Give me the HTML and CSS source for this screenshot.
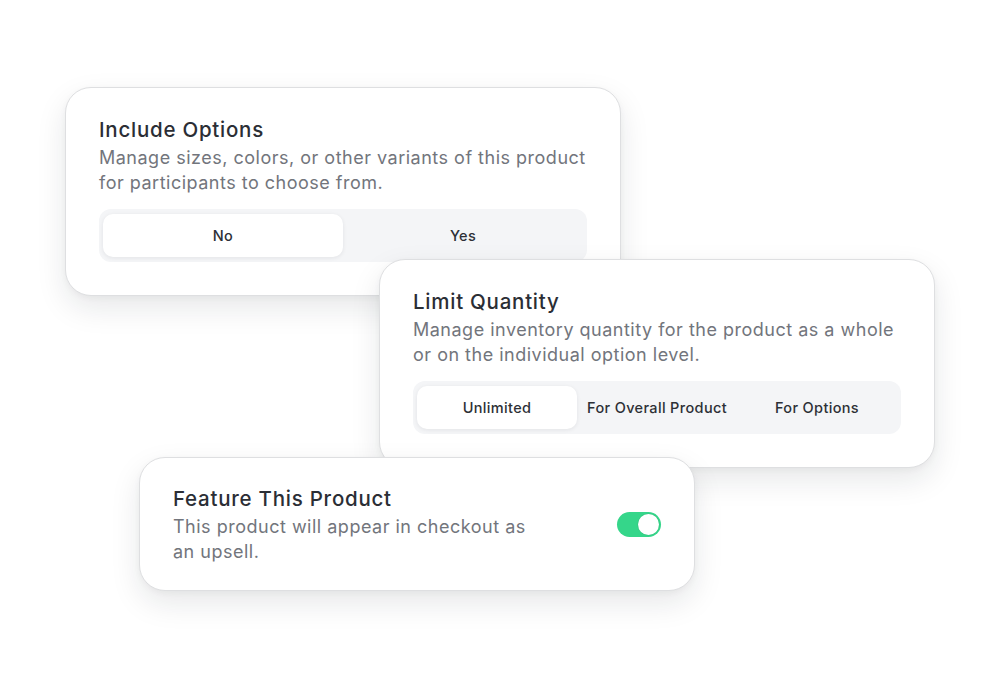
FILE: index.html
```html
<!DOCTYPE html>
<html>
<head>
<meta charset="utf-8">
<link rel="stylesheet" href="styles.css">
</head>
<body>
<div class="canvas">
  <section class="card card-options">
    <h2 class="card-title">Include Options</h2>
    <p class="card-desc">Manage sizes, colors, or other variants of this product for participants to choose from.</p>
    <div class="segmented two">
      <div class="seg active">No</div>
      <div class="seg">Yes</div>
    </div>
  </section>

  <section class="card card-quantity">
    <h2 class="card-title">Limit Quantity</h2>
    <p class="card-desc">Manage inventory quantity for the product as a whole or on the individual option level.</p>
    <div class="segmented three">
      <div class="seg active">Unlimited</div>
      <div class="seg">For Overall Product</div>
      <div class="seg">For Options</div>
    </div>
  </section>

  <section class="card card-feature">
    <div class="feature-row">
      <div class="feature-text">
        <h2 class="card-title">Feature This Product</h2>
        <p class="card-desc">This product will appear in checkout as an upsell.</p>
      </div>
      <div class="toggle"><span class="knob"></span></div>
    </div>
  </section>
</div>
</body>
</html>
```

FILE: styles.css
```css
* { box-sizing: border-box; }
html, body {
  margin: 0;
  padding: 0;
  background: #ffffff;
}
body {
  font-family: "Inter", "Noto Sans", "Liberation Sans", sans-serif;
  color: #2b2e35;
}
.canvas {
  position: relative;
  width: 1000px;
  height: 680px;
  overflow: hidden;
}
.card {
  position: absolute;
  width: 556px;
  background: #ffffff;
  border: 1.5px solid #dedfe1;
  border-radius: 26px;
  box-shadow: 0 12px 30px rgba(20, 25, 35, 0.10), 0 2px 6px rgba(20, 25, 35, 0.04);
  padding: 29px 33px 33px 33px;
}
.card-options { left: 65px; top: 87px; height: 209px; z-index: 1; }
.card-quantity { left: 379px; top: 259px; height: 209px; z-index: 2; }
.card-feature { left: 139px; top: 457px; height: 134px; z-index: 3; padding-top: 28px; }

.card-title {
  margin: 0;
  font-size: 20.5px;
  line-height: 26px;
  font-weight: 500;
  color: #2b2e35;
  letter-spacing: 0.75px;
}
.card-desc {
  margin: 2px -6px 0 0;
  font-size: 18px;
  line-height: 25px;
  font-weight: 400;
  color: #72757c;
  letter-spacing: 0.5px;
}
.segmented {
  margin-top: 14px;
  display: grid;
  gap: 0;
  background: #f4f5f7;
  border-radius: 12px;
  padding: 5px 4px;
  height: 53px;
}
.segmented.two { grid-template-columns: 240px 1fr; }
.segmented.three { grid-template-columns: 160px 1fr 1fr; }
.seg {
  display: flex;
  align-items: center;
  justify-content: center;
  font-size: 14.5px;
  font-weight: 500;
  color: #2d3036;
  border-radius: 10px;
  white-space: nowrap;
  letter-spacing: 0.35px;
}
.seg.active {
  background: #ffffff;
  box-shadow: 0 1px 4px rgba(20, 25, 35, 0.08);
}
.feature-row {
  display: flex;
  align-items: center;
  justify-content: space-between;
}
.feature-text { width: 365px; }
.toggle {
  position: relative;
  width: 44px;
  height: 25px;
  border-radius: 13px;
  background: #35d68a;
  margin-top: -2px;
}
.knob {
  position: absolute;
  right: 2px;
  top: 2px;
  width: 21px;
  height: 21px;
  border-radius: 50%;
  background: #ffffff;
  box-shadow: 0 0 0 0.5px rgba(0,0,0,0.08);
}
```
